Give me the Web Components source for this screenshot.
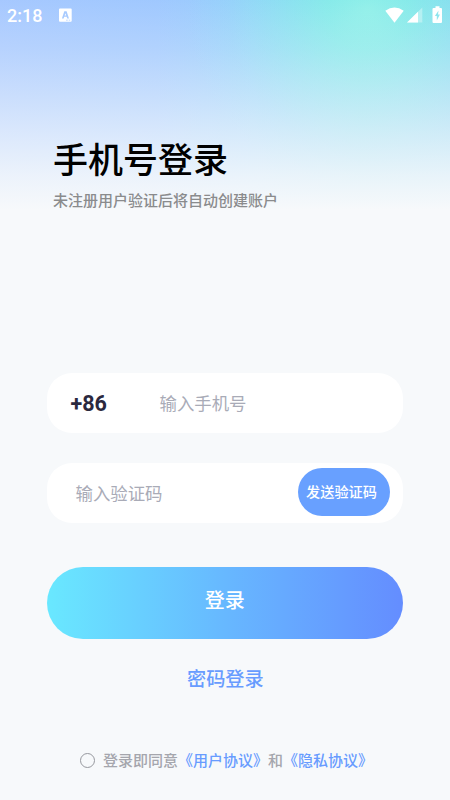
<!DOCTYPE html>
<html lang="zh-CN">
<head>
<meta charset="utf-8">
<title>手机号登录</title>
<style>
html,body{margin:0;padding:0}
body{width:450px;height:800px;overflow:hidden;font-family:Roboto,"Noto Sans CJK SC",sans-serif;background:#f7f9fb}
</style>
</head>
<body>
<login-screen></login-screen>
<script>
function define(name, html) {
  const template = document.createElement('template');
  template.innerHTML = html.trim();
  customElements.define(name, class extends HTMLElement {
    constructor() {
      super();
      this.attachShadow({mode: 'open'}).appendChild(template.content.cloneNode(true));
    }
  });
}

define('status-bar', `
<style>
:host{display:flex;height:30px;box-sizing:border-box;padding:0 7px;align-items:center;color:#fff}
.time{font-size:18px;font-weight:500;line-height:32px;width:52px;padding-top:1px}
svg{display:block}
.spacer{flex:1}
.wifi{margin-right:3px}
.signal{margin-right:9px}
</style>
<span class="time">2:18</span>
<svg width="13" height="14" viewBox="0 0 13 14"><path fill="#fff" fill-rule="evenodd" d="M1 .4h10.8q.9 0 .9 1v11.300q0 1-.9 1H1q-1 0-1-1V1.400q0-1 1-1ZM5.300 3.200 2.900 10.500h1.800l.5-1.700h2.500l.5 1.700H10L7.600 3.200Zm1.100 2 .8 2.400H5.600ZM7 11.800v.7h1.800v-.7Zm2.700 0v.7h1.500v-.7Z"/></svg>
<span class="spacer"></span>
<svg class="wifi" width="19" height="16" viewBox="0 0 19 16"><path fill="#fff" d="M.3 3.700Q9.500-2.700 18.700 3.700L9.500 15.800Z"/></svg>
<svg class="signal" width="16" height="16" viewBox="0 0 16 16"><path fill="#fff" opacity=".35" d="M0 15.500 15.300.5v15Z"/><path fill="#fff" d="M0 15.500 11 4.700v10.800Z"/></svg>
<svg width="11" height="18" viewBox="0 0 11 18"><path fill="#fff" fill-rule="evenodd" d="M3.500.3h4V2H9q1 0 1 1v13q0 1-1 1H1.500q-1 0-1-1V3q0-1 1-1h2ZM6.500 4.500 2.900 10h1.900v4.500L7.900 8.600H6Z"/></svg>
`);

define('page-heading', `
<style>
:host{display:block}
h1{margin:0;height:45px;line-height:45px;font-size:35px;font-weight:500;color:#000}
p{margin:5px 0 0;height:24px;line-height:24px;font-size:15px;font-weight:500;color:#8a8b8d}
</style>
<h1><slot name="title"></slot></h1><p><slot></slot></p>
`);

define('form-field', `
<style>
:host{display:flex;align-items:center;box-sizing:border-box;width:355.500px;height:60px;border-radius:25px;background:#fff;padding:0 12.500px 0 28.500px;font-size:17.4px;color:#a9abb7}
.hint{flex:1;line-height:60px;padding-top:2px}
</style>
<slot name="prefix"></slot><span class="hint"><slot></slot></span><slot name="action"></slot>
`);

define('country-code', `
<style>
:host{display:block;width:84px;margin-left:-5px;margin-right:5px;padding-top:2px;font-size:21.500px;font-weight:700;line-height:60px;color:#2b283e}
</style>
<slot></slot>
`);

define('code-button', `
<style>
:host{display:block;box-sizing:border-box;width:92px;height:48px;margin-bottom:2px;border-radius:24px;background:#68a0ff;padding-left:8px;font-size:14.200px;font-weight:500;line-height:49px;color:#fff}
</style>
<slot></slot>
`);

define('primary-button', `
<style>
:host{display:block;width:355.500px;height:72px;border-radius:36px;background:linear-gradient(90deg,#69e8ff 0%,#67b8ff 50%,#648dff 100%);text-align:center;font-size:20px;font-weight:500;line-height:68px;color:#fff}
</style>
<slot></slot>
`);

define('text-link', `
<style>:host{color:#689cff}</style><slot></slot>
`);

define('agreement-row', `
<style>
:host{display:flex;align-items:center;height:24px;font-size:15px;font-weight:500;color:#a5a6ad;line-height:24px;white-space:nowrap}
i{box-sizing:border-box;width:15px;height:15px;border:1px solid #96989e;border-radius:50%;margin-right:8px}
span{padding-top:1px}
</style>
<i></i><span><slot></slot></span>
`);

define('login-screen', `
<style>
:host{display:block;width:450px;height:800px;background:
 linear-gradient(180deg,rgba(247,249,251,.06) 0,rgba(247,249,251,.26) 50px,rgba(247,249,251,.5) 100px,rgba(247,249,251,.68) 135px,rgba(247,249,251,.87) 175px,#f7f9fb 210px) 0 0/450px 210px no-repeat,
 radial-gradient(ellipse 180px 180px at 368px 10px,#8aefe8 0,rgba(128,238,231,.85) 22%,rgba(130,236,235,.5) 50%,rgba(132,225,243,.17) 78%,rgba(140,200,255,0) 100%) 0 0/450px 210px no-repeat,
 linear-gradient(90deg,#a1c5ff 0,#9ac5ff 35%,#91cdfb 56%,#7cd0f0 80%,#80cef2 100%) 0 0/450px 210px no-repeat,#f7f9fb}
main{display:flex;flex-direction:column;align-items:flex-start;padding:105px 0 0 47px}
page-heading{height:238px;box-sizing:border-box;padding:109px 0 0 53px}
.code{margin-top:30px}
primary-button{margin-top:44px}
.password{margin-top:26px;margin-left:140px;font-size:19.200px;font-weight:500;line-height:29px}
agreement-row{margin-top:54px;margin-left:33px}
</style>
<status-bar></status-bar>
<page-heading><span slot="title">手机号登录</span>未注册用户验证后将自动创建账户</page-heading>
<main>
<form-field><country-code slot="prefix">+86</country-code>输入手机号</form-field>
<form-field class="code">输入验证码<code-button slot="action">发送验证码</code-button></form-field>
<primary-button>登录</primary-button>
<text-link class="password">密码登录</text-link>
<agreement-row>登录即同意<text-link>《用户协议》</text-link>和<text-link>《隐私协议》</text-link></agreement-row>
</main>
`);
</script>
</body>
</html>
